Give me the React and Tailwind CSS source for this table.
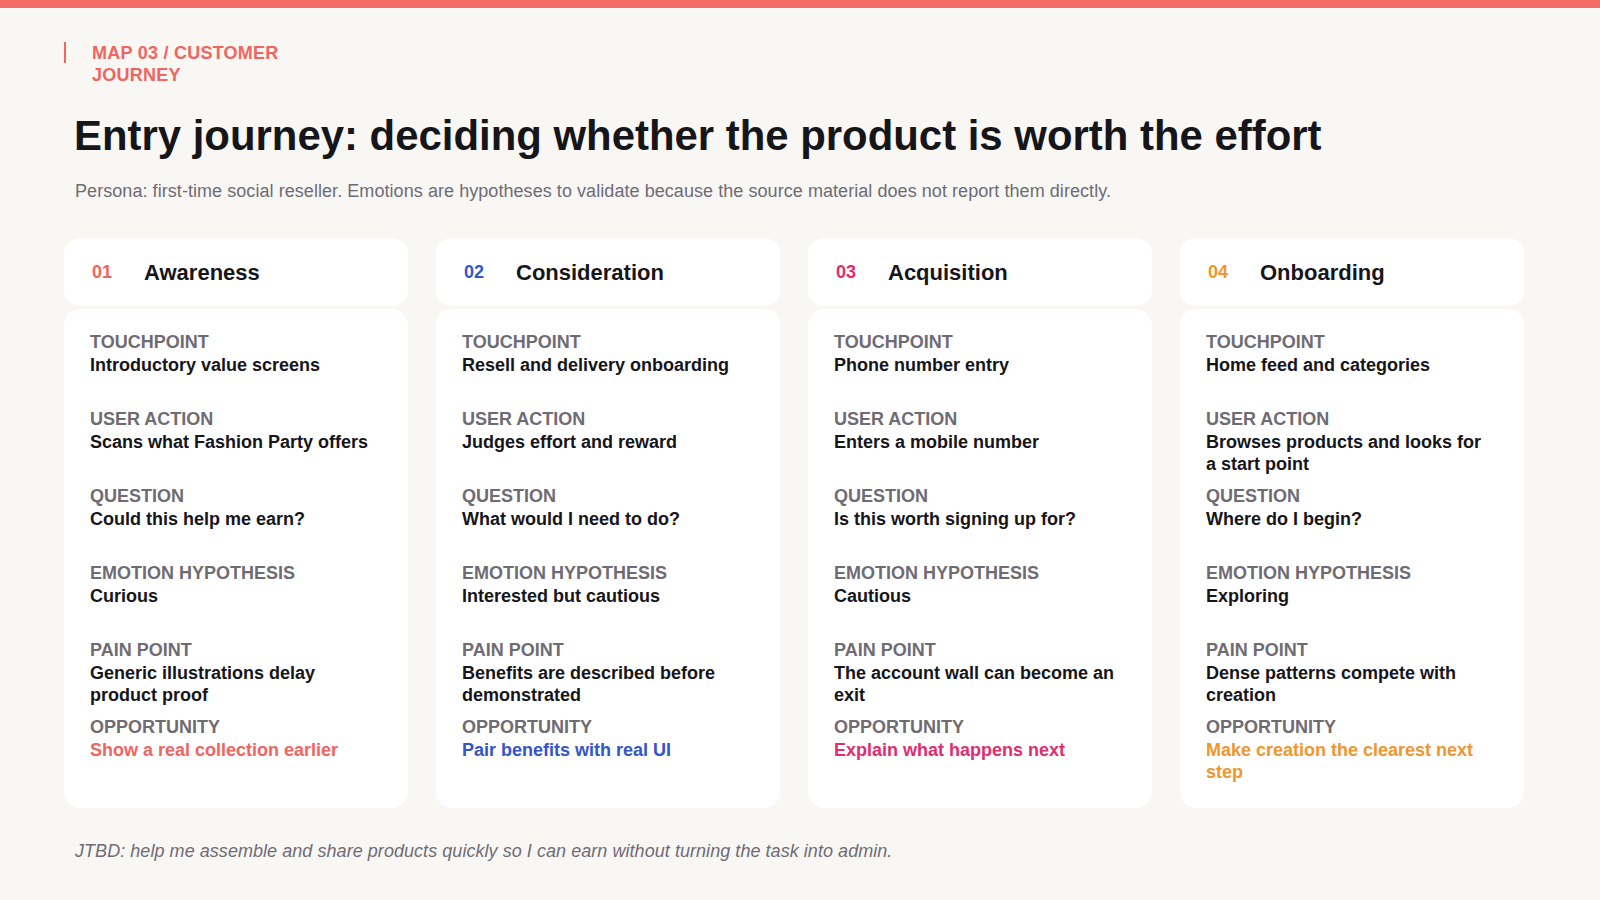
import React from "react";

const stages = [
  {
    num: "01",
    title: "Awareness",
    accent: "text-[#f0655f]",
    rows: [
      ["Touchpoint", "Introductory value screens"],
      ["User action", "Scans what Fashion Party offers"],
      ["Question", "Could this help me earn?"],
      ["Emotion hypothesis", "Curious"],
      ["Pain point", "Generic illustrations delay product proof"],
    ],
    opportunity: "Show a real collection earlier",
  },
  {
    num: "02",
    title: "Consideration",
    accent: "text-[#3355cc]",
    rows: [
      ["Touchpoint", "Resell and delivery onboarding"],
      ["User action", "Judges effort and reward"],
      ["Question", "What would I need to do?"],
      ["Emotion hypothesis", "Interested but cautious"],
      ["Pain point", "Benefits are described before demonstrated"],
    ],
    opportunity: "Pair benefits with real UI",
  },
  {
    num: "03",
    title: "Acquisition",
    accent: "text-[#e02d6f]",
    rows: [
      ["Touchpoint", "Phone number entry"],
      ["User action", "Enters a mobile number"],
      ["Question", "Is this worth signing up for?"],
      ["Emotion hypothesis", "Cautious"],
      ["Pain point", "The account wall can become an exit"],
    ],
    opportunity: "Explain what happens next",
  },
  {
    num: "04",
    title: "Onboarding",
    accent: "text-[#f0962e]",
    rows: [
      ["Touchpoint", "Home feed and categories"],
      ["User action", "Browses products and looks for a start point"],
      ["Question", "Where do I begin?"],
      ["Emotion hypothesis", "Exploring"],
      ["Pain point", "Dense patterns compete with creation"],
    ],
    opportunity: "Make creation the clearest next step",
  },
];

function StageColumn({ stage }) {
  return (
    <div className="flex flex-col gap-[3px]">
      <div className="h-[68px] rounded-2xl bg-white flex items-center pl-[28px]">
        <span className={`w-[52px] text-[18px] font-bold ${stage.accent}`}>{stage.num}</span>
        <span className="text-[22px] font-bold text-[#16151a]">{stage.title}</span>
      </div>
      <div className="flex-1 rounded-2xl bg-white pl-[26px] pr-[36px] pt-[22px] pb-[25px]">
        {stage.rows.map(([label, value]) => (
          <div key={label} className="h-[77px]">
            <p className="text-[18px] leading-[23px] font-bold uppercase text-[#6f6b74]">{label}</p>
            <p className="text-[18px] leading-[22px] font-bold text-[#16151a]">{value}</p>
          </div>
        ))}
        <div>
          <p className="text-[18px] leading-[23px] font-bold uppercase text-[#6f6b74]">Opportunity</p>
          <p className={`text-[18px] leading-[22px] font-bold ${stage.accent}`}>{stage.opportunity}</p>
        </div>
      </div>
    </div>
  );
}

export default function App() {
  return (
    <div className="min-h-screen bg-[#f8f7f4] font-['Liberation_Sans',Arial,sans-serif]">
      <div className="h-2 bg-[#f26b66]" />
      <div className="px-16 pt-[34px]">
        <div className="flex items-start gap-[26px]">
          <span className="w-[2px] h-[21px] bg-[#f0655f]" />
          <p className="w-[200px] text-[18px] leading-[22px] font-bold uppercase tracking-[0.25px] text-[#f0655f]">
            Map 03 / Customer journey
          </p>
        </div>
        <h1 className="mt-[25px] pl-[10px] text-[41.9px] leading-[50px] font-bold text-[#16151a]">
          Entry journey: deciding whether the product is worth the effort
        </h1>
        <p className="mt-[19px] pl-[11px] text-[18px] leading-[22px] tracking-[0.06px] text-[#6f6b74]">
          Persona: first-time social reseller. Emotions are hypotheses to validate because the source material does not report them directly.
        </p>
        <div className="mt-[36px] w-[1460px] grid grid-cols-4 gap-[28px]">
          {stages.map((s) => (
            <StageColumn key={s.num} stage={s} />
          ))}
        </div>
        <p className="mt-[32px] pl-[11px] text-[18px] leading-[22px] italic tracking-[0.05px] text-[#6f6b74]">
          JTBD: help me assemble and share products quickly so I can earn without turning the task into admin.
        </p>
      </div>
    </div>
  );
}
